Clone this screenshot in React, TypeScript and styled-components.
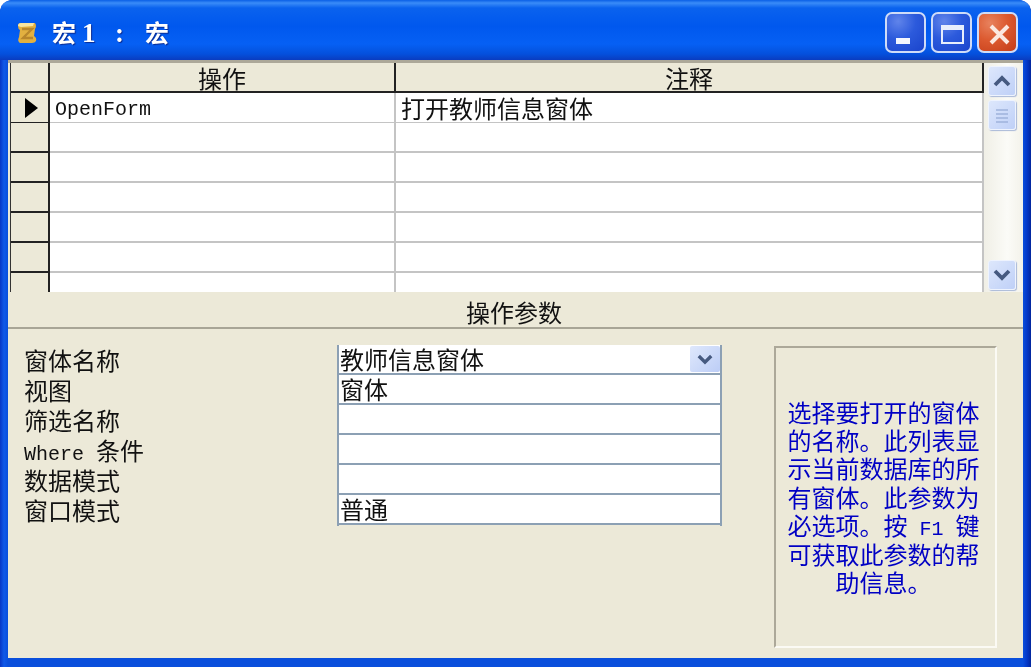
import styled, { createGlobalStyle } from "styled-components";

const GlobalStyle = createGlobalStyle`
    html, body {
        margin: 0;
        padding: 0;
        background: #fff;
    }
    * {
        box-sizing: border-box;
    }
`

const cjk = `"Noto Sans CJK SC", "Liberation Sans", sans-serif`
const mono = `"Liberation Mono", "Noto Sans CJK SC", monospace`

const Frame = styled.div`
    width: 1031px;
    height: 667px;
    display: flex;
    flex-direction: column;
    padding: 0 8px 9px 8px;
    border-radius: 12px 12px 0 0;
    background: linear-gradient(90deg, #0836c4 0, #1059e8 4px, #0a4fdc 8px, #0a4fdc 1023px, #0438c8 1027px, #02269c 1031px);
    font-family: ${cjk};
    color: #111;
    overflow: hidden;
    filter: blur(0.45px);
`

const TitleBar = styled.div`
    height: 60px;
    flex: none;
    margin: 0 -8px;
    padding: 5px 13px 0 17px;
    display: flex;
    align-items: center;
    border-radius: 12px 12px 0 0;
    background: linear-gradient(180deg, #0a5fe6 0, #3a8cf8 3px, #0a62ee 8px, #0058ee 26px, #0660f4 44px, #0450dc 54px, #0a3cc0 60px);
`

const TitleIcon = styled.svg`
    width: 20px;
    height: 20px;
    flex: none;
    margin-right: 15px;
`

const TitleText = styled.div`
    flex: 1;
    font-size: 24px;
    line-height: 30px;
    font-weight: 700;
    color: #fff;
    white-space: pre;
    text-shadow: 1px 1px 1px #0a2a90;
    display: flex;
    align-items: baseline;
`

const TitleLatin = styled.span<{ $gap: number }>`
    font-family: "Liberation Serif", serif;
    font-size: 27px;
    margin-left: ${props => props.$gap}px;
    width: 14px;
`

const TitleChar = styled.span<{ $gap?: number }>`
    margin-left: ${props => props.$gap ?? 0}px;
`

const ButtonGroup = styled.div`
    display: flex;
    gap: 5px;
`

const WinButton = styled.div<{ $close?: boolean }>`
    width: 41px;
    height: 41px;
    border: 2px solid #cfdcf8;
    border-radius: 7px;
    display: flex;
    align-items: center;
    justify-content: center;
    background: ${props => props.$close
        ? "radial-gradient(circle at 30% 25%, #e8825e 0, #dc5a30 45%, #c43c18 100%)"
        : "radial-gradient(circle at 30% 20%, #6084ea 0, #2c5adc 45%, #1a44cc 100%)"};
`

const Body = styled.div`
    flex: 1;
    background: #ece9d8;
    display: flex;
    flex-direction: column;
    min-height: 0;
`

const TopPane = styled.div`
    height: 232px;
    flex: none;
    display: flex;
    background: #fff;
    border-top: 3px solid #aca899;
    padding-left: 2px;
    box-shadow: inset 2px 0 0 #ece9d8;
`

const MacroGrid = styled.div`
    flex: 1;
    overflow: hidden;
    display: flex;
    flex-direction: column;
    border-left: 1px solid #333;
`

const GridRow = styled.div`
    height: 30px;
    flex: none;
    display: grid;
    grid-template-columns: 39px 346px 1fr;
`

const Selector = styled.div`
    background: #ece9d8;
    border-right: 2px solid #222;
    border-bottom: 2px solid #222;
    display: flex;
    align-items: center;
    justify-content: center;
    padding-left: 4px;
`

const HeadCell = styled.div`
    background: #ece9d8;
    border-right: 2px solid #222;
    border-bottom: 2px solid #222;
    padding-top: 2px;
    font-size: 24px;
    line-height: 26px;
    text-align: center;
`

const Cell = styled.div`
    background: #fff;
    border-right: 2px solid #c4c4c4;
    border-bottom: 2px solid #c4c4c4;
    padding: 3px 0 0 5px;
    font-size: 24px;
    line-height: 24px;
    white-space: nowrap;
`

const MonoCell = styled(Cell)`
    padding-top: 5px;
    font-family: ${mono};
    font-size: 20px;
`

const ScrollBar = styled.div`
    width: 39px;
    flex: none;
    padding: 3px 7px 2px 4px;
    display: flex;
    flex-direction: column;
    align-items: center;
    background: linear-gradient(90deg, #f0efe6, #fbfbf7 60%, #f3f2ea);
`

const ScrollButton = styled.div`
    width: 28px;
    height: 30px;
    flex: none;
    border-radius: 3px;
    background: linear-gradient(135deg, #dde7fc, #bfd0f7);
    border: 1px solid #eef3fe;
    box-shadow: 1px 1px 1px #a9b8d8;
    display: flex;
    align-items: center;
    justify-content: center;
`

const ScrollThumb = styled(ScrollButton)`
    margin-top: 4px;
    margin-bottom: auto;
`

const SectionBar = styled.div`
    height: 37px;
    flex: none;
    border-bottom: 2px solid #a8a596;
    padding: 2px 3px 0 0;
    font-size: 24px;
    line-height: 35px;
    text-align: center;
    background: #ece9d8;
`

const Params = styled.div`
    flex: 1;
    display: flex;
    min-height: 0;
    padding: 16px 26px 10px 16px;
`

const Labels = styled.div`
    width: 313px;
    flex: none;
`

const Label = styled.div`
    height: 30px;
    font-size: 24px;
    line-height: 30px;
    white-space: pre;
`

const Latin = styled.span`
    font-family: "Liberation Mono", monospace;
    font-size: 20px;
    line-height: 1;
`

const Fields = styled.div`
    width: 385px;
    height: 181px;
    flex: none;
    border-left: 2px solid #8ca0b4;
    border-right: 2px solid #8ca0b4;
`

const Field = styled.div`
    height: 30px;
    background: #fff;
    border-bottom: 2px solid #8ca0b4;
    padding-left: 1px;
    font-size: 24px;
    line-height: 28px;
    display: flex;
    align-items: center;
    justify-content: space-between;
`

const Drop = styled.div`
    width: 30px;
    height: 26px;
    border-radius: 2px;
    background: linear-gradient(135deg, #dfe8fc, #bccdf6);
    display: flex;
    align-items: center;
    justify-content: center;
`

const HelpBox = styled.div`
    width: 223px;
    height: 302px;
    flex: none;
    margin: 1px 0 0 52px;
    border: 2px solid;
    border-color: #aca899 #fbfaf4 #fbfaf4 #aca899;
    padding: 0 6px 0 2px;
    display: flex;
    flex-direction: column;
    justify-content: center;
    align-items: center;
    color: #0000c4;
    font-size: 24px;
    line-height: 28.4px;
    text-align: center;
`

const HelpLine = styled.div`
    height: 28.4px;
    white-space: pre;
`

const gridRows = [0, 1, 2, 3, 4, 5, 6]
const paramLabels = ["窗体名称", "视图", "筛选名称", "", "数据模式", "窗口模式"]
const paramValues = ["教师信息窗体", "窗体", "", "", "", "普通"]
const helpLines = ["选择要打开的窗体", "的名称。此列表显", "示当前数据库的所", "有窗体。此参数为", "", "可获取此参数的帮", "助信息。"]

const ScrollChevron = ({ up }: { up?: boolean }) => (
    <svg width="18" height="12" viewBox="0 0 18 12">
        <path d={up ? "M2 10 L9 3 L16 10" : "M2 2 L9 9 L16 2"} fill="none" stroke="#465a80" strokeWidth="3.8" />
    </svg>
)

export default function App() {
    return (
        <Frame>
            <GlobalStyle />
            <TitleBar>
                <TitleIcon viewBox="0 0 20 20">
                    <path d="M1 3 Q1 0 4 0 L18 0 Q20 3 18 6 L17 13 Q20 15 19 18 Q18 20 15 20 L3 20 Q0 18 2 14 L3 7 Q1 6 1 3 Z" fill="#e2b040" />
                    <path d="M5 6 L15 6 L6 15 L16 15" fill="none" stroke="#b8862c" strokeWidth="2.4" />
                    <path d="M1 3 Q1 0 4 0 L17 0 L16 3 L4 4 Z" fill="#f7e4a0" />
                </TitleIcon>
                <TitleText>
                    <TitleChar>宏</TitleChar>
                    <TitleLatin $gap={6}>1</TitleLatin>
                    <TitleLatin $gap={19}>:</TitleLatin>
                    <TitleChar $gap={16}>宏</TitleChar>
                </TitleText>
                <ButtonGroup>
                    <WinButton>
                        <svg width="26" height="26" viewBox="0 0 26 26">
                            <rect x="3" y="18" width="14" height="6" fill="#f4f6fe" />
                        </svg>
                    </WinButton>
                    <WinButton>
                        <svg width="26" height="26" viewBox="0 0 26 26">
                            <rect x="3" y="6" width="21" height="17" fill="none" stroke="#e8eefc" strokeWidth="2" />
                            <rect x="3" y="6" width="21" height="4" fill="#e8eefc" />
                        </svg>
                    </WinButton>
                    <WinButton $close>
                        <svg width="26" height="26" viewBox="0 0 26 26">
                            <path d="M6 6 L23 23 M23 6 L6 23" stroke="#fbe8e0" strokeWidth="4" />
                        </svg>
                    </WinButton>
                </ButtonGroup>
            </TitleBar>
            <Body>
                <TopPane>
                    <MacroGrid>
                        <GridRow>
                            <Selector />
                            <HeadCell>操作</HeadCell>
                            <HeadCell>注释</HeadCell>
                        </GridRow>
                        {gridRows.map(row => (
                            <GridRow key={row}>
                                <Selector>
                                    {row === 0 && (
                                        <svg width="14" height="20" viewBox="0 0 14 20">
                                            <path d="M0 0 L13 10 L0 20 Z" fill="#000" />
                                        </svg>
                                    )}
                                </Selector>
                                <MonoCell>{row === 0 ? "OpenForm" : ""}</MonoCell>
                                <Cell>{row === 0 ? "打开教师信息窗体" : ""}</Cell>
                            </GridRow>
                        ))}
                    </MacroGrid>
                    <ScrollBar>
                        <ScrollButton><ScrollChevron up /></ScrollButton>
                        <ScrollThumb>
                            <svg width="14" height="16" viewBox="0 0 14 16">
                                <path d="M1 3 H13 M1 7 H13 M1 11 H13 M1 15 H13" stroke="#9fb2dc" strokeWidth="1.5" />
                            </svg>
                        </ScrollThumb>
                        <ScrollButton><ScrollChevron /></ScrollButton>
                    </ScrollBar>
                </TopPane>
                <SectionBar>操作参数</SectionBar>
                <Params>
                    <Labels>
                        {paramLabels.map((label, i) => (
                            <Label key={i}>
                                {label || <><Latin>Where </Latin>条件</>}
                            </Label>
                        ))}
                    </Labels>
                    <Fields>
                        {paramValues.map((value, i) => (
                            <Field key={i}>
                                {value}
                                {i === 0 && (
                                    <Drop>
                                        <svg width="16" height="11" viewBox="0 0 18 12">
                                            <path d="M2 2 L9 9 L16 2" fill="none" stroke="#465a80" strokeWidth="3.8" />
                                        </svg>
                                    </Drop>
                                )}
                            </Field>
                        ))}
                    </Fields>
                    <HelpBox>
                        {helpLines.map((line, i) => (
                            <HelpLine key={i}>
                                {line || <>必选项。按<Latin> F1 </Latin>键</>}
                            </HelpLine>
                        ))}
                    </HelpBox>
                </Params>
            </Body>
        </Frame>
    )
}
